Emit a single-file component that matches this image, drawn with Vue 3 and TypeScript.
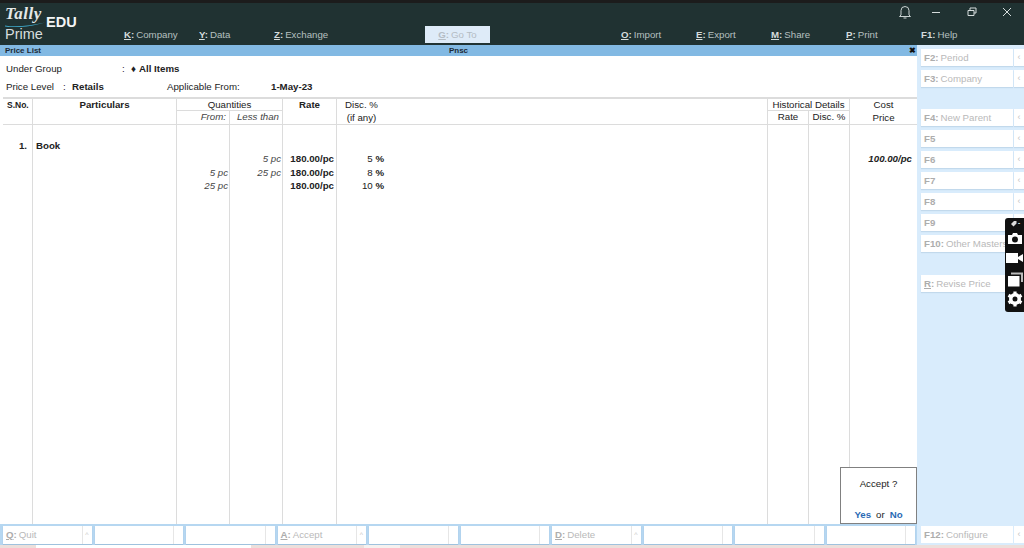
<template>
  <div class="screen">
    <header class="topbar">
      <div class="logo">
        <div class="logoStack">
          <span class="tally">Tally</span>
          <svg class="swoosh" width="40" height="5" viewBox="0 0 40 5">
            <path d="M0 3.4 C12 5.6 26 3 40 0.4 C28 4 12 6.4 0 4.6 Z" fill="#3fa9c9" />
          </svg>
          <span class="prime">Prime</span>
        </div>
        <span class="edu">EDU</span>
      </div>
      <nav class="menu">
        <span v-for="m in menuItems" :key="m.key" class="menuItem" :class="m.cls">
          <b><u v-if="m.key !== 'F1'">{{ m.key }}</u><template v-else>{{ m.key }}</template>:</b>{{ m.label }}
        </span>
      </nav>
      <div class="winBtns">
        <svg width="14" height="16" viewBox="0 0 14 16" fill="none" stroke="#c9d2d2" stroke-width="1">
          <path d="M3 11 V6.5 a4 4 0 0 1 8 0 V11 L12.5 12.5 H1.5 Z M5.5 14 h3" />
        </svg>
        <svg width="10" height="10" viewBox="0 0 10 10" stroke="#d5dcdc" fill="none"><path d="M1 5.5 h8" /></svg>
        <svg width="10" height="10" viewBox="0 0 10 10" stroke="#d5dcdc" fill="none"><path d="M1 3.5 h6 v5 h-6 z M3 3 v-2 h6 v5 h-2" /></svg>
        <svg width="10" height="10" viewBox="0 0 10 10" stroke="#d5dcdc" fill="none"><path d="M1 1 L9 9 M9 1 L1 9" /></svg>
      </div>
    </header>

    <div class="middle">
      <div class="left">
        <div class="titlebar">
          <span class="titleName">Price List</span>
          <span>Pnsc</span>
          <span class="closeX">✖</span>
        </div>

        <main class="content">
          <div class="infoRow first">
            <span class="lblGroup">Under Group</span>
            <span class="colon">:</span>
            <span class="diamond">♦</span>
            <b>All Items</b>
          </div>
          <div class="infoRow">
            <span class="lblLevel">Price Level</span>
            <span class="colon2">:</span>
            <b class="retails">Retails</b>
            <span class="lblFrom">Applicable From:</span>
            <b>1-May-23</b>
          </div>

          <div class="table">
            <div class="hd sno">S.No.</div>
            <div class="hd particulars">Particulars</div>
            <div class="hd qty">Quantities</div>
            <div class="hd from">From:</div>
            <div class="hd less">Less than</div>
            <div class="hd rate">Rate</div>
            <div class="hd disc">Disc. %<br />(if any)</div>
            <div class="hd hist">Historical Details</div>
            <div class="hd histRate">Rate</div>
            <div class="hd histDisc">Disc. %</div>
            <div class="hd cost">Cost<br />Price</div>

            <div v-for="col in columns" :key="col.cls" class="col" :class="col.cls">
              <div v-for="(c, i) in col.cells" :key="i" class="cell">{{ c }}</div>
            </div>
            <div class="col bDisc">
              <div class="cell"></div>
              <div v-for="d in discounts" :key="d" class="cell">{{ d }} <b>%</b></div>
            </div>
            <div class="col bHistRate"></div>
            <div class="col bHistDisc"></div>
            <div class="col bCost">
              <div class="cell"></div>
              <div class="cell">100.00/pc</div>
            </div>
          </div>

          <div class="dialog">
            <div>Accept ?</div>
            <div class="dlgA"><b>Yes</b><span>or</span><b>No</b></div>
          </div>
        </main>
      </div>

      <aside class="side">
        <div v-for="b in sideButtons" :key="b.key" class="sideBtn" :class="b.cls">
          <span class="btnText">
            <b><u v-if="b.key === 'R'">R</u><template v-else>{{ b.key }}</template><template v-if="b.label">:</template></b>{{ b.label }}
          </span>
          <span class="arrow">‹</span>
        </div>
      </aside>

      <div class="capture">
        <div class="capTop">
          <svg width="7" height="7" viewBox="0 0 7 7"><path d="M1 4 L4 1 H6.5 V3.5 L3.5 6.5 Z" fill="#ddd" /></svg>
          <span class="dots">•••</span>
        </div>
        <svg class="capCam" width="16" height="13" viewBox="0 0 16 13">
          <path d="M1 3 H5 L6 1 H10 L11 3 H15 V12 H1 Z" fill="#fff" />
          <circle cx="8" cy="7.5" r="3" fill="#111" />
        </svg>
        <svg class="capVid" width="17" height="12" viewBox="0 0 17 12">
          <path d="M0 1 H12 V11 H0 Z M12 5 L17 2 V10 L12 7 Z" fill="#fff" />
        </svg>
        <svg class="capStack" width="16" height="15" viewBox="0 0 16 15">
          <path d="M4 0.5 H16 V10 H14 V2.5 H4 Z" fill="#bbb" />
          <path d="M1 4 H12.5 V14.5 H1 Z" fill="#fff" />
        </svg>
        <svg class="capGear" width="16" height="16" viewBox="0 0 16 16">
          <circle cx="8" cy="8" r="6" fill="#fff" />
          <g stroke="#fff" stroke-width="3.2">
            <path d="M8 0.5 V15.5" />
            <path d="M1.5 4.25 L14.5 11.75" />
            <path d="M1.5 11.75 L14.5 4.25" />
          </g>
          <circle cx="8" cy="8" r="2.5" fill="#111" />
        </svg>
      </div>
    </div>

    <footer class="bottom">
      <div class="bottomBtns">
        <div v-for="(b, i) in bottomButtons" :key="i" class="botBtn">
          <span class="btnText"><template v-if="b.key"><b><u>{{ b.key }}</u>:</b>{{ b.label }}</template></span>
          <span class="botArrow"><template v-if="b.key">^</template></span>
        </div>
      </div>
      <div class="botRight">
        <div class="sideBtn f12">
          <span class="btnText"><b>F12:</b>Configure</span>
          <span class="arrow">‹</span>
        </div>
      </div>
    </footer>
    <div class="strip">
      <span class="seg1"></span>
      <span class="seg2"></span>
      <span class="seg3"></span>
      <span class="seg4"></span>
      <span class="seg5"></span>
    </div>
  </div>
</template>

<script setup lang="ts">
const menuItems = [
  { key: "K", label: "Company", cls: "" },
  { key: "Y", label: "Data", cls: "" },
  { key: "Z", label: "Exchange", cls: "wide" },
  { key: "G", label: "Go To", cls: "goto" },
  { key: "O", label: "Import", cls: "" },
  { key: "E", label: "Export", cls: "" },
  { key: "M", label: "Share", cls: "" },
  { key: "P", label: "Print", cls: "" },
  { key: "F1", label: "Help", cls: "" },
];

const sideButtons = [
  { key: "F2", label: "Period", cls: "" },
  { key: "F3", label: "Company", cls: "" },
  { key: "F4", label: "New Parent", cls: "gap" },
  { key: "F5", label: "", cls: "" },
  { key: "F6", label: "", cls: "" },
  { key: "F7", label: "", cls: "" },
  { key: "F8", label: "", cls: "" },
  { key: "F9", label: "", cls: "" },
  { key: "F10", label: "Other Masters", cls: "" },
  { key: "R", label: "Revise Price", cls: "gapLast" },
];

const bottomButtons = [
  { key: "Q", label: "Quit" },
  { key: "", label: "" },
  { key: "", label: "" },
  { key: "A", label: "Accept" },
  { key: "", label: "" },
  { key: "", label: "" },
  { key: "D", label: "Delete" },
  { key: "", label: "" },
  { key: "", label: "" },
  { key: "", label: "" },
];

const columns = [
  { cls: "bSno", cells: ["1."] },
  { cls: "bPart", cells: ["Book"] },
  { cls: "bFrom", cells: ["", "", "5 pc", "25 pc"] },
  { cls: "bLess", cells: ["", "5 pc", "25 pc"] },
  { cls: "bRate", cells: ["", "180.00/pc", "180.00/pc", "180.00/pc"] },
];

const discounts = [5, 8, 10];
</script>

<style>
html,
body {
  margin: 0;
  background: #fff;
}
</style>

<style scoped>
.screen {
  width: 1024px;
  height: 548px;
  display: flex;
  flex-direction: column;
  overflow: hidden;
  font-family: "Liberation Sans", Arial, sans-serif;
  font-size: 9.7px;
  color: #222;
}
.topbar {
  height: 45px;
  flex: none;
  box-sizing: border-box;
  border-top: 3px solid #1c1c1c;
  background: #203232;
  position: relative;
  display: flex;
}
.logo {
  width: 124px;
  flex: none;
  display: flex;
  padding-left: 5px;
  box-sizing: border-box;
}
.logoStack {
  width: 41px;
  display: flex;
  flex-direction: column;
}
.tally {
  margin-top: 2px;
  font: italic 700 17px/18px "Liberation Serif", serif;
  letter-spacing: 0.5px;
  color: #e4e8e8;
}
.swoosh {
  display: block;
  margin-top: -1px;
}
.prime {
  font-size: 14.5px;
  line-height: 15px;
  color: #d8dddd;
}
.edu {
  margin-top: 11px;
  font-size: 14.5px;
  line-height: 16px;
  font-weight: 700;
  color: #f3f5f5;
}
.menu {
  flex: 1;
  display: flex;
  align-items: flex-start;
  padding-top: 23px;
}
.menuItem {
  width: 75px;
  flex: none;
  height: 17px;
  line-height: 17px;
  color: #b6c0c0;
  white-space: nowrap;
}
.menuItem b {
  font-weight: 700;
  color: #d5dcdc;
  margin-right: 2px;
}
.menuItem.wide {
  width: 151px;
}
.menuItem.goto {
  width: 65px;
  margin-right: 131px;
  text-align: center;
  background: #deebf8;
  color: #b4bcc4;
}
.menuItem.goto b {
  color: #b4bcc4;
}
.winBtns {
  position: absolute;
  top: 1px;
  right: 12px;
  height: 16px;
  display: flex;
  align-items: center;
}
.winBtns svg:nth-child(1) { margin-right: 19px; }
.winBtns svg:nth-child(2) { margin-right: 26px; }
.winBtns svg:nth-child(3) { margin-right: 25px; }

.middle {
  flex: 1;
  min-height: 0;
  display: flex;
  position: relative;
}
.left {
  width: 917px;
  flex: none;
  display: flex;
  flex-direction: column;
}
.titlebar {
  height: 11px;
  flex: none;
  background: #82b9e3;
  display: grid;
  grid-template-columns: 1fr auto 1fr;
  align-items: center;
  font-size: 8px;
  font-weight: 700;
  color: #1d2a35;
}
.titleName {
  padding-left: 5px;
}
.closeX {
  justify-self: end;
  color: #111;
  padding-right: 1px;
}
.content {
  flex: 1;
  min-height: 0;
  background: #fff;
  display: flex;
  flex-direction: column;
  position: relative;
}
.infoRow {
  display: flex;
  align-items: center;
  padding-left: 6px;
  height: 18px;
  flex: none;
  white-space: nowrap;
}
.infoRow.first {
  margin-top: 3px;
}
.lblGroup { width: 116px; }
.colon { width: 9px; }
.diamond { width: 8px; }
.lblLevel { width: 57px; }
.colon2 { width: 9px; }
.retails { width: 95px; }
.lblFrom { width: 104px; }

.table {
  flex: 1;
  min-height: 0;
  margin: 2px 0 0 3px;
  border-top: 2px solid #dcdcdc;
  display: grid;
  grid-template-columns: 30px 144px 53px 53px 54px 431px 41px 41px 67px;
  grid-template-rows: 12px 14px 1fr;
}
.hd {
  box-sizing: border-box;
  text-align: center;
  border-right: 1px solid #dcdcdc;
  border-bottom: 1px solid #dcdcdc;
  line-height: 12.5px;
  white-space: nowrap;
}
.sno { grid-area: 1 / 1 / 3 / 2; font-weight: 700; font-size: 8.5px; text-align: left; padding-left: 4px; }
.particulars { grid-area: 1 / 2 / 3 / 3; font-weight: 700; }
.qty { grid-area: 1 / 3 / 2 / 5; line-height: 12px; }
.from { grid-area: 2 / 3 / 3 / 4; font-style: italic; text-align: right; padding-right: 3px; color: #444; }
.less { grid-area: 2 / 4 / 3 / 5; font-style: italic; text-align: right; padding-right: 3px; color: #444; }
.rate { grid-area: 1 / 5 / 3 / 6; font-weight: 700; }
.disc { grid-area: 1 / 6 / 3 / 7; padding-right: 381px; }
.hist { grid-area: 1 / 7 / 2 / 9; line-height: 12px; }
.histRate { grid-area: 2 / 7 / 3 / 8; }
.histDisc { grid-area: 2 / 8 / 3 / 9; }
.cost { grid-area: 1 / 9 / 3 / 10; border-right: none; }

.col {
  grid-row: 3;
  box-sizing: border-box;
  border-right: 1px solid #dcdcdc;
  padding-top: 13.5px;
  min-width: 0;
}
.cell {
  height: 13.5px;
  line-height: 13.5px;
  white-space: nowrap;
  text-align: right;
}
.bSno .cell { font-weight: 700; padding-right: 5px; }
.bPart .cell { font-weight: 700; text-align: left; padding-left: 3px; }
.bFrom .cell,
.bLess .cell { font-style: italic; padding-right: 1px; color: #444; }
.bRate .cell { font-weight: 700; padding-right: 2px; }
.bDisc .cell { width: 47px; }
.bHistRate { grid-column: 7; }
.bHistDisc { grid-column: 8; }
.bCost { border-right: none; }
.bCost .cell { font-weight: 700; font-style: italic; padding-right: 5px; }

.dialog {
  position: absolute;
  right: 0;
  bottom: 0;
  width: 77px;
  height: 57px;
  box-sizing: border-box;
  border: 1px solid #808080;
  background: #fff;
  text-align: center;
  display: flex;
  flex-direction: column;
  justify-content: space-between;
  padding: 10px 0 3px;
}
.dlgA {
  display: flex;
  justify-content: center;
  gap: 5px;
}
.dlgA b {
  color: #2a6ab5;
}

.side {
  flex: 1;
  background: #d9ecfc;
  box-sizing: border-box;
  padding-left: 4px;
}
.sideBtn {
  height: 17px;
  margin-top: 4px;
  display: flex;
  color: #b9b9b9;
  line-height: 17px;
}
.sideBtn.gap {
  margin-top: 22px;
}
.sideBtn.gapLast {
  margin-top: 23px;
}
.btnText {
  flex: 1;
  min-width: 0;
  padding-left: 3px;
  white-space: nowrap;
  overflow: hidden;
  background: #fff;
  box-shadow: 0 1px 1px #c2d9ec;
}
.btnText b {
  color: #adadad;
  margin-right: 2px;
}
.arrow {
  width: 10px;
  flex: none;
  margin-left: 1px;
  text-align: center;
  background: #fff;
  color: #c4c4c4;
  font-size: 9px;
  box-shadow: 0 1px 1px #c2d9ec;
}

.capture {
  position: absolute;
  top: 173px;
  right: 0;
  width: 19px;
  height: 94px;
  background: #111;
  border-radius: 3px 0 0 3px;
  display: flex;
  flex-direction: column;
  align-items: center;
  color: #ddd;
}
.capture svg {
  flex: none;
}
.capTop {
  height: 10px;
  display: flex;
  align-items: center;
  gap: 1px;
  font-size: 4px;
}
.dots {
  letter-spacing: -1px;
}
.capCam { margin-top: 4px; }
.capVid { margin-top: 7px; }
.capStack { margin-top: 8px; }
.capGear { margin-top: 4px; }

.bottom {
  height: 21px;
  flex: none;
  display: flex;
}
.bottomBtns {
  width: 917px;
  flex: none;
  box-sizing: border-box;
  background: #b6d7f1;
  display: grid;
  grid-template-columns: repeat(10, 1fr);
  gap: 3px;
  padding: 2px 2px 2px 3px;
}
.botBtn {
  display: flex;
  min-width: 0;
  background: #fff;
  box-shadow: 0 1px 1px #9fc2de;
  color: #b9b9b9;
  line-height: 18px;
}
.botBtn .btnText {
  box-shadow: none;
}
.botArrow {
  width: 9px;
  flex: none;
  border-left: 1px solid #e6e6e6;
  text-align: center;
  font-size: 7px;
  color: #c8c8c8;
}
.botRight {
  flex: 1;
  background: #d9ecfc;
  padding-left: 4px;
}
.sideBtn.f12 {
  margin-top: 2px;
}
.sideBtn.f12 .btnText,
.sideBtn.f12 .arrow {
  box-shadow: none;
}
.strip {
  height: 3px;
  flex: none;
  display: flex;
  background: #ecdfdb;
}
.seg1 { width: 36px; }
.seg2 { width: 215px; background: #fff; }
.seg3 { width: 113px; }
.seg4 { width: 36px; background: #f6f1ef; }
.seg5 { flex: 1; }
</style>
